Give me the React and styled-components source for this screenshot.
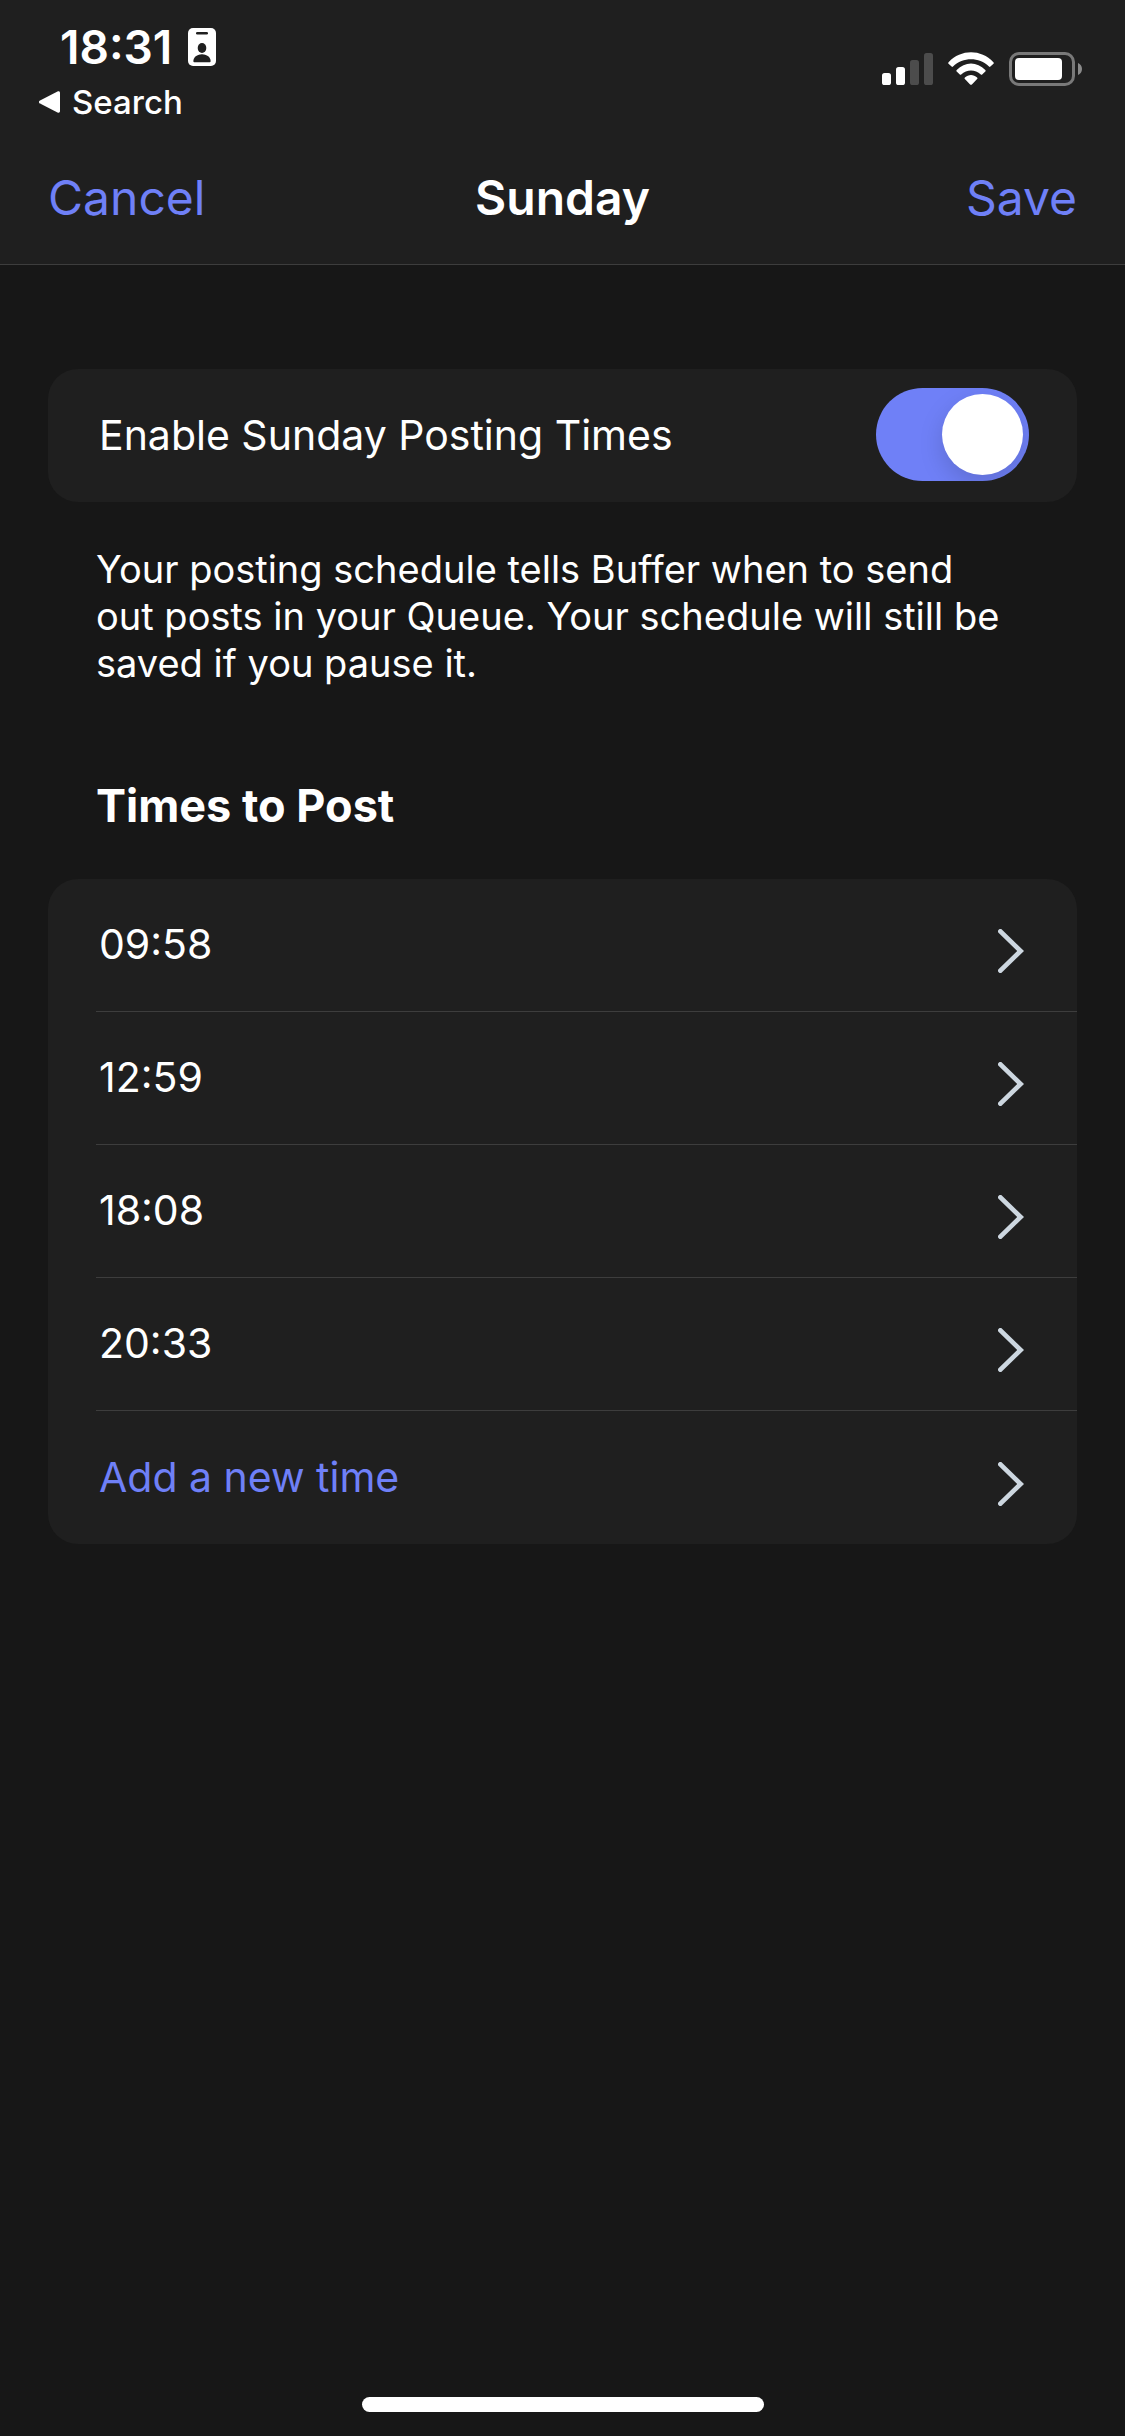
// Import global npm modules
import React, { useState } from 'react'
import styled, { createGlobalStyle } from 'styled-components'

const times = [
    {
        id: 1,
        text: '09:58',
    },
    {
        id: 2,
        text: '12:59',
    },
    {
        id: 3,
        text: '18:08',
    },
    {
        id: 4,
        text: '20:33',
    },
    {
        id: 5,
        text: 'Add a new time',
        accent: true,
    }
]

const Chevron = () => (
    <ChevronIcon width="26" height="44" viewBox="0 0 26 44" fill="none" aria-hidden="true">
        <path d="M2.4 2.4L22.6 22L2.4 41.6" stroke="#CDD7E0" strokeWidth="4.8" strokeLinecap="round" strokeLinejoin="miter"/>
    </ChevronIcon>
)

const StatusIcons = () => (
    <svg width="200" height="34" viewBox="0 0 200 34" fill="none" aria-hidden="true">
        {/* signal */}
        <rect x="0" y="21" width="9" height="12" rx="2.6" fill="#fff"/>
        <rect x="14" y="15" width="9" height="18" rx="2.6" fill="#fff"/>
        <rect x="28" y="8" width="9" height="25" rx="2.6" fill="#4C4C4C"/>
        <rect x="42" y="1" width="9" height="32" rx="2.6" fill="#4C4C4C"/>
        {/* wifi */}
        <path d="M66.6 10.2C79 -3 99 -3 111.4 10.2C112 10.8 112 11.3 111.5 11.8L108.4 14.6C107.9 15 107.5 15 107 14.5C97 4.9 81 4.9 71 14.5C70.5 15 70.1 15 69.6 14.6L66.5 11.8C66 11.3 66 10.8 66.6 10.2Z" fill="#fff"/>
        <path d="M74.7 18C82.8 9.2 95.2 9.2 103.3 18C103.8 18.6 103.8 19 103.3 19.5L100.2 22.4C99.7 22.8 99.3 22.8 98.8 22.4C93.2 17.1 84.8 17.1 79.2 22.4C78.7 22.8 78.3 22.8 77.8 22.4L74.7 19.5C74.2 19 74.2 18.6 74.7 18Z" fill="#fff"/>
        <path d="M82.9 25.6C86.4 22.2 91.6 22.2 95.1 25.6C95.6 26.2 95.6 26.6 95.1 27.1L89.9 32.4C89.3 33 88.7 33 88.1 32.4L82.9 27.1C82.4 26.6 82.4 26.2 82.9 25.6Z" fill="#fff"/>
        {/* battery */}
        <rect x="128.5" y="1.5" width="63" height="31" rx="8.5" stroke="#797979" strokeWidth="3"/>
        <rect x="133" y="6" width="47" height="22" rx="4" fill="#fff"/>
        <path d="M196 11C198.4 12 200 14.3 200 17C200 19.7 198.4 22 196 23Z" fill="#8A8A8A"/>
    </svg>
)

const App = () => {
    const [enabled, setEnabled] = useState(true)

    return <Page>
        <GlobalStyle />

        <Header>
            <StatusBar>
                <StatusLeft>
                    <Clock>
                        18:31
                        <svg width="28" height="38" viewBox="0 0 28 38" aria-hidden="true">
                            <rect width="28" height="38" rx="5" fill="#fff"/>
                            <rect x="8" y="4" width="12" height="2.6" rx="1.3" fill="#1F1F1F"/>
                            <ellipse cx="14" cy="20" rx="4.3" ry="5" fill="#1F1F1F"/>
                            <path d="M5.4 33.5C5 30 8.3 26.2 14 26.2C19.7 26.2 23 30 22.6 33.5C22.5 34 22.2 34.2 21.8 34.2H6.2C5.8 34.2 5.5 34 5.4 33.5Z" fill="#1F1F1F"/>
                        </svg>
                    </Clock>
                    <BackLink href="#search">
                        <svg width="21" height="22" viewBox="0 0 21 22" aria-hidden="true">
                            <path d="M18.5 0.4C20 -0.2 21 0.5 21 2V20C21 21.5 20 22.1 18.5 21.5L1 12.6C-0.4 11.8 -0.4 10.2 1 9.4Z" fill="#fff"/>
                        </svg>
                        Search
                    </BackLink>
                </StatusLeft>
                <StatusIcons />
            </StatusBar>

            <NavBar>
                <NavButton type="button">Cancel</NavButton>
                <NavTitle>Sunday</NavTitle>
                <NavButton type="button" $end>Save</NavButton>
            </NavBar>
        </Header>

        <Content>
            <SwitchCard>
                <label htmlFor="enable">Enable Sunday Posting Times</label>
                <Switch
                    id="enable"
                    type="checkbox"
                    checked={enabled}
                    onChange={() => setEnabled(!enabled)}
                />
            </SwitchCard>
            <Hint>
                Your posting schedule tells Buffer when to send out posts in your Queue. Your schedule will still be saved if you pause it.
            </Hint>

            <Title>Times to Post</Title>
            <TimeList>
                {times.map(item => {
                    return (
                        <TimeItem key={item.id}>
                            <TimeButton type="button" $accent={item.accent}>
                                {item.text}
                                <Chevron />
                            </TimeButton>
                        </TimeItem>
                    )
                })}
            </TimeList>
        </Content>

        <HomeIndicator />
    </Page>
}

const GlobalStyle = createGlobalStyle`
    * {
        box-sizing: border-box;
    }

    body {
        margin: 0;
        background: #171717;
    }

    button {
        padding: 0;
        border: none;
        background: none;
        font: inherit;
        cursor: pointer;
    }
`

const Page = styled.div`
    display: flex;
    flex-direction: column;
    min-height: 100vh;
    background: #171717;
    color: #ffffff;
    font-family: Inter, 'Liberation Sans', sans-serif;
    font-size: 41px;
    line-height: 48px;
`

const Header = styled.header`
    background: #1f1f1f;
    border-bottom: 1px solid #3d3d3d;
`

const StatusBar = styled.div`
    display: flex;
    justify-content: space-between;
    align-items: flex-start;
    padding: 24px 43px 0 39px;

    & > svg {
        margin-top: 28px;
    }
`

const StatusLeft = styled.div`
    display: flex;
    flex-direction: column;
    gap: 8px;
`

const Clock = styled.div`
    display: flex;
    align-items: center;
    gap: 16px;
    padding-left: 21px;
    font-weight: 600;
    font-size: 46px;
    line-height: 46px;
`

const BackLink = styled.a`
    display: flex;
    align-items: center;
    gap: 12px;
    color: #ffffff;
    font-weight: 500;
    font-size: 33px;
    line-height: 48px;
    text-decoration: none;
`

const NavBar = styled.nav`
    display: grid;
    grid-template-columns: 1fr auto 1fr;
    align-items: center;
    padding: 41px 48px 35px;
    font-size: 48px;
    line-height: 62px;
`

const NavButton = styled.button`
    justify-self: ${props => props.$end ? 'end' : 'start'};
    color: #6f80f7;
`

const NavTitle = styled.h1`
    margin: 0;
    font-weight: 600;
    font-size: 48px;
`

const Content = styled.main`
    padding: 104px 48px 0;
`

const SwitchCard = styled.div`
    display: flex;
    justify-content: space-between;
    align-items: center;
    min-height: 133px;
    padding: 0 48px 2px 51px;
    border-radius: 30px;
    background: #1f1f1f;
`

const Switch = styled.input`
    appearance: none;
    display: flex;
    justify-content: ${props => props.checked ? 'flex-end' : 'flex-start'};
    width: 153px;
    height: 93px;
    margin: 0;
    padding: 6px;
    border-radius: 47px;
    background: ${props => props.checked ? '#6f80f7' : '#3d3d3d'};
    overflow: hidden;
    cursor: pointer;

    &::before {
        content: '';
        width: 81px;
        height: 81px;
        border-radius: 50%;
        background: #ffffff;
        box-shadow: 0 9px 24px rgba(0, 0, 0, 0.15);
    }
`

const Hint = styled.p`
    margin: 0;
    padding: 44px 64px 0 48px;
    font-size: 38px;
    line-height: 47px;
`

const Title = styled.h2`
    margin: 0;
    padding: 93px 48px 47px;
    font-weight: 700;
    font-size: 45px;
    line-height: 52px;
`

const TimeList = styled.ul`
    margin: 0;
    padding: 0 0 0 48px;
    border-radius: 30px;
    background: #1f1f1f;
    list-style: none;
`

const TimeItem = styled.li`
    display: flex;
    min-height: 133px;

    &:not(:last-child) {
        border-bottom: 1px solid #3d3d3d;
    }
`

const TimeButton = styled.button`
    display: flex;
    flex: 1;
    justify-content: space-between;
    align-items: center;
    padding: 0 53px 2px 3px;
    color: ${props => props.$accent ? '#6f80f7' : '#ffffff'};
    text-align: left;
`

const ChevronIcon = styled.svg`
    margin-top: 14px;
`

const HomeIndicator = styled.div`
    width: 402px;
    height: 15px;
    margin: auto auto 24px;
    border-radius: 8px;
    background: #ffffff;
`

// Export default App ui
export default App
